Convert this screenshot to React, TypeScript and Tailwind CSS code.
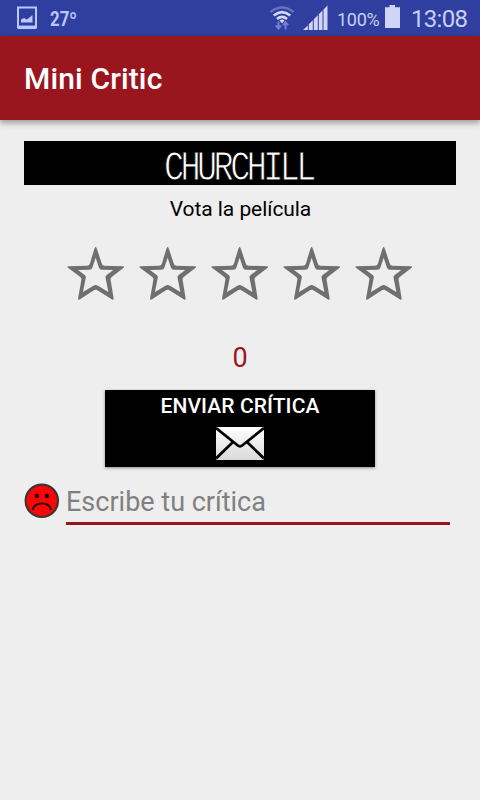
import React, { useState } from 'react';

const StatusBar: React.FC = () => (
  <div className="h-9 bg-[#303f9f] flex items-center justify-between text-[#c9cff5]">
    <div className="flex items-center pl-[17px]">
      <svg width="20" height="24" viewBox="0 0 20 24" fill="none">
        <path d="M1 1.5H19V21.5H1Z" stroke="#bcc6ff" strokeWidth="2" />
        <path d="M1 21.3H19" stroke="#bcc6ff" strokeWidth="3.5" />
        <path d="M4 16.5V13.5L7 12L10 13.5L15.5 9V16.5Z" fill="#bcc6ff" />
      </svg>
      <span className="ml-[13px] mt-[2px] inline-block origin-left scale-x-[0.84] text-[20px] leading-6 font-bold text-[#bcc6ff]">27º</span>
    </div>
    <div className="flex items-center pr-3">
      <svg width="26" height="28" viewBox="0 0 26 28" fill="none">
        <path d="M1.5 8Q13 -1 24.5 8" stroke="#6472c4" strokeWidth="2.6" />
        <path d="M4.8 11.5Q13 4.8 21.2 11.5" stroke="#d5daf7" strokeWidth="2.6" />
        <path d="M8 15Q13 10.8 18 15" stroke="#d5daf7" strokeWidth="2.6" />
        <path d="M10.5 16.8Q13 14.4 15.5 16.8L13 19.2Z" fill="#d5daf7" />
        <path d="M9.5 17.5V24.5M6.9 21.5L9.5 24.4L12.1 21.5" stroke="#7380cc" strokeWidth="2" />
        <path d="M16.5 25.5V18.5M13.9 21.2L16.5 18.3L19.1 21.2" stroke="#7380cc" strokeWidth="2" />
      </svg>
      <svg className="ml-[8px]" width="26" height="26" viewBox="0 0 26 26" fill="#d0d5f4">
        <path d="M0 25L4.8 20.5V25ZM5.8 19.3L9.8 15.3V25H5.8ZM10.8 14.3L14.8 10.3V25H10.8ZM15.8 9.3L19.5 5.5V25H15.8ZM20.5 4.5L24.5 0.5V25H20.5Z" />
      </svg>
      <span className="ml-[8px] mt-[3px] w-[44px] text-[18px] leading-6 tracking-[-0.3px] whitespace-nowrap">100%</span>
      <svg className="ml-[4px] -mt-[3px]" width="15" height="23" viewBox="0 0 15 23" fill="#d0d5f4">
        <path d="M4.5 0H10V2.3H15V23H0V2.3H4.5Z" />
      </svg>
      <span className="ml-[11px] mt-[2px] w-[57px] text-[24px] leading-7 tracking-[-0.7px] whitespace-nowrap">13:08</span>
    </div>
  </div>
);

interface StarProps {
  filled: boolean;
  onClick: () => void;
}

const Star: React.FC<StarProps> = ({ filled, onClick }) => (
  <button type="button" onClick={onClick} className="w-[72px] h-[70px]">
    <svg width="72" height="70" viewBox="0 0 216 210" fill={filled ? '#9a161f' : '#6f6f6f'}>
      <path
        fillRule="evenodd"
        d="M107 20Q110 22 112 30L126 73Q128 77 133 77L190 79Q195 80 190 84L155 111Q151 115 152 120L161 176Q160 181 155 178L111 150Q107 148 103 150L60 178Q54 181 54 176L64 120Q65 115 61 111L25 84Q20 80 25 79L82 77Q87 77 89 73L102 30Q104 22 107 20ZM107 53L97 83Q95 89 88 89L54 90L74 105Q79 109 77 115L69 156L100 137Q107 133 114 137L145 156L137 115Q135 109 140 105L160 90L126 89Q119 89 117 83Z"
      />
    </svg>
  </button>
);

const Envelope: React.FC = () => (
  <svg width="48" height="33" viewBox="0 0 48 33" fill="none">
    <defs>
      <linearGradient id="paper" x1="0" y1="0" x2="0" y2="1">
        <stop offset="0" stopColor="#ffffff" />
        <stop offset="1" stopColor="#d9d9d9" />
      </linearGradient>
    </defs>
    <rect width="48" height="33" rx="1" fill="url(#paper)" />
    <path d="M0 1L21.5 18.3Q24 20.3 26.5 18.3L48 1M0 31.5L16.5 15.5M48 31.5L31.5 15.5" stroke="#000" strokeWidth="2.7" />
  </svg>
);

const SadFace: React.FC = () => (
  <svg width="36" height="36" viewBox="0 0 36 36" fill="none">
    <circle cx="17.8" cy="17.8" r="16.2" fill="#fb0508" stroke="#3c3532" strokeWidth="2.2" />
    <circle cx="12.9" cy="13" r="2.3" fill="#250000" />
    <circle cx="22.9" cy="13" r="2.3" fill="#250000" />
    <path d="M8.8 26.3Q10.5 20.6 18 20.6T26.8 26.3" stroke="#250000" strokeWidth="2" strokeLinecap="round" />
  </svg>
);

export default function App() {
  const [rating, setRating] = useState(0);
  const [review, setReview] = useState('');

  return (
    <div className="h-[800px] w-[480px] overflow-hidden bg-[#eeeeee] font-['Roboto',sans-serif]">
      <StatusBar />
      <header className="h-[84px] bg-[#9a161f] px-6 flex items-center shadow-[0_3px_6px_rgba(0,0,0,0.35)]">
        <h1 className="mt-[1px] text-[30px] leading-9 font-medium tracking-[0.15px] text-white">Mini Critic</h1>
      </header>

      <main className="px-6 pt-[21px] flex flex-col">
        <div className="h-11 bg-black flex items-center justify-center">
          <span className="mt-[11px] mr-[4px] scale-x-[0.78] font-['Liberation_Mono',monospace] text-[43px] leading-[37px] tracking-[-4.6px] text-white [-webkit-text-stroke:1px_black]">
            CHURCHILL
          </span>
        </div>
        <p className="mt-[10px] text-center text-[21px] leading-7 tracking-[-0.06px] text-black">
          <span className="ml-[1px]">Vota la película</span>
        </p>

        <div className="mt-[17px] flex justify-center">
          {[1, 2, 3, 4, 5].map(n => (
            <Star key={n} filled={n <= rating} onClick={() => setRating(n)} />
          ))}
        </div>
        <p className="mt-[30px] text-center text-[27px] leading-9 text-[#9a161f]">{rating}</p>

        <button
          type="button"
          className="mt-[14px] h-[77px] w-[270px] self-center bg-black flex flex-col items-center shadow-[0_1px_3px_rgba(0,0,0,0.4)]"
        >
          <span className="mt-[4px] text-[21px] leading-6 font-medium tracking-[0.08px] text-white">ENVIAR CRÍTICA</span>
          <span className="mt-[9px]"><Envelope /></span>
        </button>

        <div className="mt-4 flex">
          <SadFace />
          <input
            value={review}
            onChange={e => setReview(e.target.value)}
            placeholder="Escribe tu crítica"
            className="ml-[6px] h-[42px] w-[384px] border-b-[3px] border-[#9a161f] bg-transparent pb-[1px] text-[27px] text-black outline-none placeholder:text-[#808080]"
          />
        </div>
      </main>
    </div>
  );
}
